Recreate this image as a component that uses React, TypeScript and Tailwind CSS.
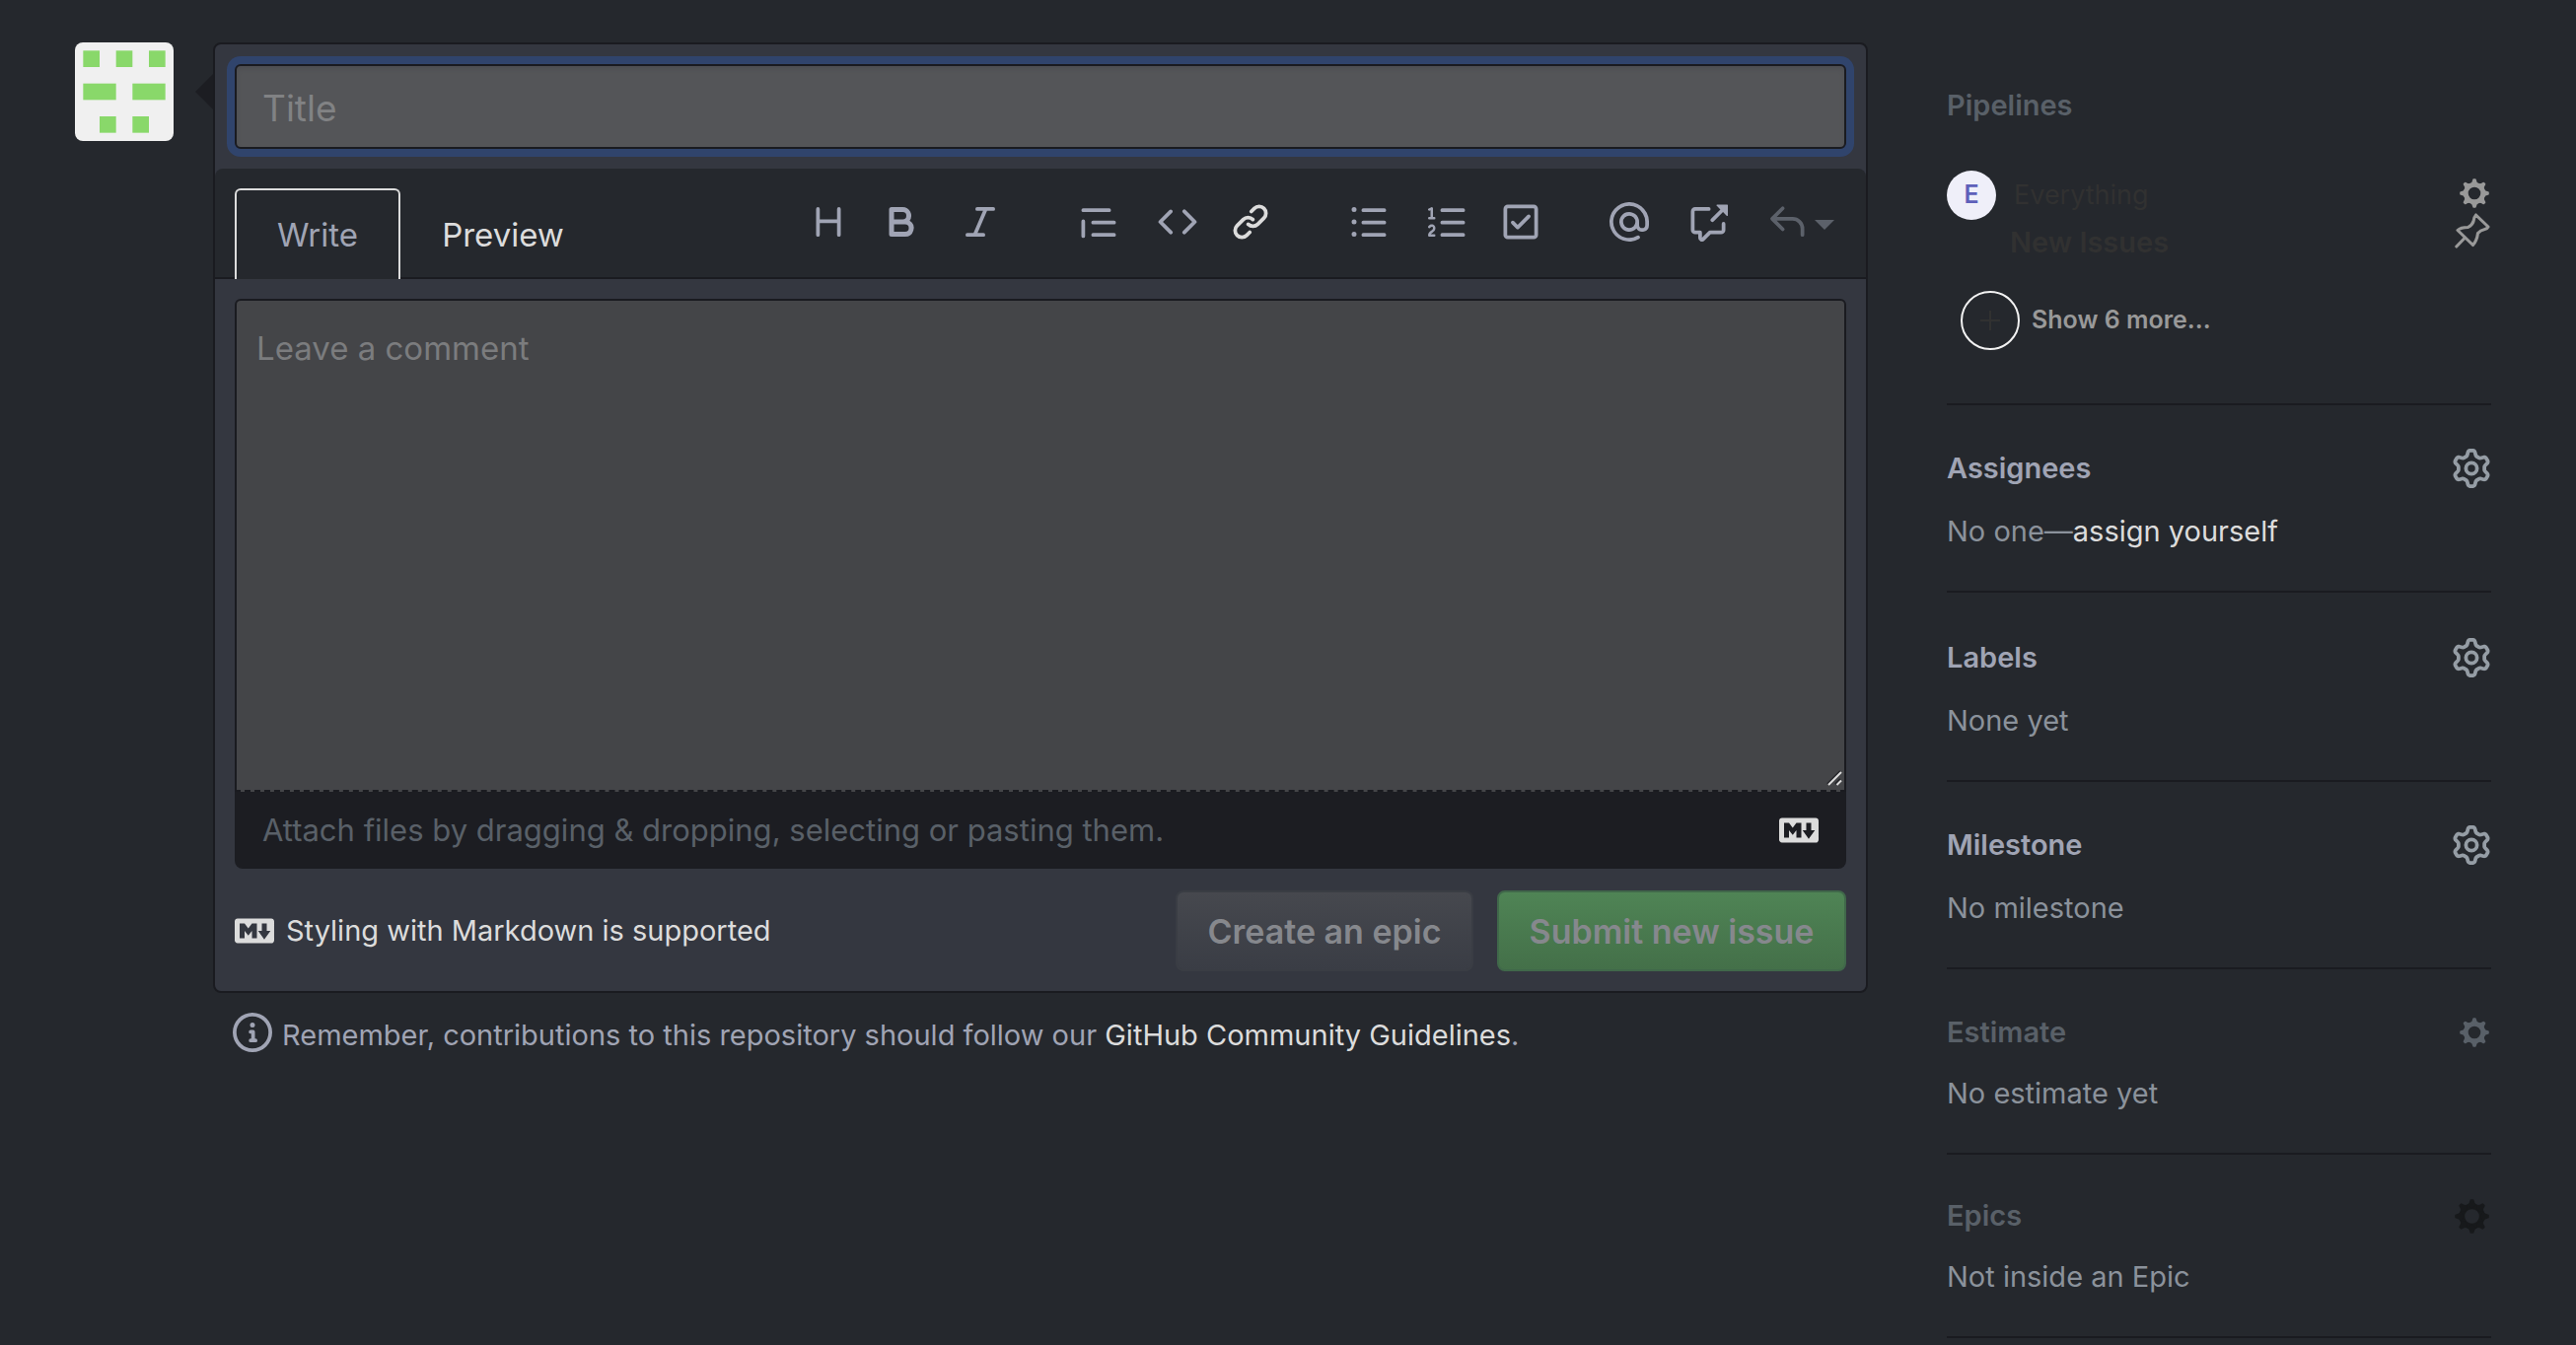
import type { ReactNode } from "react";

const PATHS = {
  heading:
    "M3.75 2a.75.75 0 01.75.75V7h7V2.75a.75.75 0 011.5 0v10.5a.75.75 0 01-1.5 0V8.5h-7v4.75a.75.75 0 01-1.5 0V2.75A.75.75 0 013.75 2z",
  bold: "M4 2a1 1 0 00-1 1v10a1 1 0 001 1h5.5a3.5 3.5 0 001.852-6.47A3.5 3.5 0 008.5 2H4zm4.5 5a1.5 1.5 0 100-3H5v3h3.5zM5 9v3h4.5a1.5 1.5 0 000-3H5z",
  italic:
    "M6 2.75A.75.75 0 016.75 2h6.5a.75.75 0 010 1.5h-2.505l-3.858 9H9.25a.75.75 0 010 1.5h-6.5a.75.75 0 010-1.5h2.505l3.858-9H6.75A.75.75 0 016 2.75z",
  quote:
    "M1.75 2.5a.75.75 0 000 1.5h10.5a.75.75 0 000-1.5H1.75zm4 5a.75.75 0 000 1.5h8.5a.75.75 0 000-1.5h-8.5zm0 5a.75.75 0 000 1.5h8.5a.75.75 0 000-1.5h-8.5zM2.5 7.75a.75.75 0 00-1.5 0v6a.75.75 0 001.5 0v-6z",
  code: "M4.72 3.22a.75.75 0 011.06 1.06L2.06 8l3.72 3.72a.75.75 0 11-1.06 1.06L.47 8.53a.75.75 0 010-1.06l4.25-4.25zm6.56 0a.75.75 0 10-1.06 1.06L13.94 8l-3.72 3.72a.75.75 0 101.06 1.06l4.25-4.25a.75.75 0 000-1.06l-4.25-4.25z",
  link: "M7.775 3.275a.75.75 0 001.06 1.06l1.25-1.25a2 2 0 112.83 2.83l-2.5 2.5a2 2 0 01-2.83 0 .75.75 0 00-1.06 1.06 3.5 3.5 0 004.95 0l2.5-2.5a3.5 3.5 0 00-4.95-4.95l-1.25 1.25zm-4.69 9.64a2 2 0 010-2.83l2.5-2.5a2 2 0 012.83 0 .75.75 0 001.06-1.06 3.5 3.5 0 00-4.95 0l-2.5 2.5a3.5 3.5 0 004.95 4.95l1.25-1.25a.75.75 0 00-1.06-1.06l-1.25 1.25a2 2 0 01-2.83 0z",
  bullets:
    "M2 4a1 1 0 100-2 1 1 0 000 2zm3.75-1.5a.75.75 0 000 1.5h8.5a.75.75 0 000-1.5h-8.5zm0 5a.75.75 0 000 1.5h8.5a.75.75 0 000-1.5h-8.5zm0 5a.75.75 0 000 1.5h8.5a.75.75 0 000-1.5h-8.5zM3 8a1 1 0 11-2 0 1 1 0 012 0zm-1 6a1 1 0 100-2 1 1 0 000 2z",
  numbers:
    "M2.003 2.5a.5.5 0 00-.723-.447l-1.003.5a.5.5 0 00.446.895l.28-.14V6H.5a.5.5 0 000 1h2.006a.5.5 0 100-1h-.503V2.5zM5 3.25a.75.75 0 01.75-.75h8.5a.75.75 0 010 1.5h-8.5A.75.75 0 015 3.25zm0 5a.75.75 0 01.75-.75h8.5a.75.75 0 010 1.5h-8.5A.75.75 0 015 8.25zm0 5a.75.75 0 01.75-.75h8.5a.75.75 0 010 1.5h-8.5a.75.75 0 01-.75-.75zM.924 10.32l.003-.004a.851.851 0 01.144-.153A.66.66 0 011.5 10c.195 0 .306.068.374.146a.57.57 0 01.128.376c0 .453-.269.682-.8 1.078l-.035.025C.692 11.98 0 12.495 0 13.5a.5.5 0 00.5.5h2.003a.5.5 0 000-1H1.146c.132-.197.351-.372.654-.597l.047-.035c.47-.35 1.156-.858 1.156-1.845 0-.365-.118-.744-.377-1.038-.268-.303-.658-.484-1.126-.484-.48 0-.84.202-1.068.392a1.858 1.858 0 00-.348.384l-.007.011-.002.004-.001.002-.001.001a.5.5 0 00.851.525z",
  tasks:
    "M2.5 2.75a.25.25 0 01.25-.25h10.5a.25.25 0 01.25.25v10.5a.25.25 0 01-.25.25H2.75a.25.25 0 01-.25-.25V2.75zM2.75 1A1.75 1.75 0 001 2.75v10.5c0 .966.784 1.75 1.75 1.75h10.5A1.75 1.75 0 0015 13.25V2.75A1.75 1.75 0 0013.25 1H2.75zm9.03 5.28a.75.75 0 00-1.06-1.06L6.75 9.19 5.28 7.72a.75.75 0 00-1.06 1.06l2 2a.75.75 0 001.06 0l4.5-4.5z",
  mention:
    "M4.75 2.37a6.5 6.5 0 006.5 11.26.75.75 0 01.75 1.298 8 8 0 113.994-7.273.754.754 0 01.006.095v1.5a2.75 2.75 0 01-5.072 1.475A4 4 0 1112 8v1.25a1.25 1.25 0 002.5 0V7.867a6.5 6.5 0 00-9.75-5.496V2.37zM10.5 8a2.5 2.5 0 10-5 0 2.5 2.5 0 005 0z",
  reference:
    "M16 1.25v4.146a.25.25 0 01-.427.177L14.03 4.03l-3.75 3.75a.75.75 0 11-1.06-1.06l3.75-3.75-1.543-1.543A.25.25 0 0111.604 1h4.146a.25.25 0 01.25.25zM2.75 3.5a.25.25 0 00-.25.25v7.5c0 .138.112.25.25.25h2a.75.75 0 01.75.75v2.19l2.72-2.72a.75.75 0 01.53-.22h4.5a.25.25 0 00.25-.25v-2.5a.75.75 0 111.5 0v2.5A1.75 1.75 0 0113.25 13H9.06l-2.573 2.573A1.457 1.457 0 014 14.543V13H2.75A1.75 1.75 0 011 11.25v-7.5C1 2.784 1.784 2 2.75 2h5.5a.75.75 0 010 1.5h-5.5z",
  reply:
    "M6.78 1.97a.75.75 0 010 1.06L3.81 6h6.44A4.75 4.75 0 0115 10.75v2.5a.75.75 0 01-1.5 0v-2.5a3.25 3.25 0 00-3.25-3.25H3.81l2.97 2.97a.75.75 0 11-1.06 1.06L1.47 7.28a.75.75 0 010-1.06l4.25-4.25a.75.75 0 011.06 0z",
  gear: "M7.429 1.525a6.593 6.593 0 011.142 0c.036.003.108.036.137.146l.289 1.105c.147.56.55.967.997 1.189.174.086.341.183.501.29.417.278.97.423 1.53.27l1.102-.303c.11-.03.175.016.195.046.219.31.41.641.573.989.014.031.022.11-.059.19l-.815.806c-.411.406-.562.957-.53 1.456a4.588 4.588 0 010 .582c-.032.499.119 1.05.53 1.456l.815.806c.08.08.073.159.059.19a6.494 6.494 0 01-.573.99c-.02.029-.086.074-.195.045l-1.103-.303c-.559-.153-1.112-.008-1.529.27-.16.107-.327.204-.5.29-.449.222-.851.628-.998 1.189l-.289 1.105c-.029.11-.101.143-.137.146a6.613 6.613 0 01-1.142 0c-.036-.003-.108-.037-.137-.146l-.289-1.105c-.147-.56-.55-.967-.997-1.189a4.502 4.502 0 01-.501-.29c-.417-.278-.97-.423-1.53-.27l-1.102.303c-.11.03-.175-.016-.195-.046a6.492 6.492 0 01-.573-.989c-.014-.031-.022-.11.059-.19l.815-.806c.411-.406.562-.957.53-1.456a4.587 4.587 0 010-.582c.032-.499-.119-1.05-.53-1.456l-.815-.806c-.08-.08-.073-.159-.059-.19a6.44 6.44 0 01.573-.99c.02-.029.086-.075.195-.045l1.103.303c.559.153 1.112.008 1.529-.27.16-.107.327-.204.5-.29.449-.222.851-.628.998-1.189l.289-1.105c.029-.11.101-.143.137-.146zM8 0c-.236 0-.47.01-.701.03-.743.065-1.29.615-1.458 1.261l-.29 1.106c-.017.066-.078.158-.211.224a5.994 5.994 0 00-.668.386c-.123.082-.233.09-.3.071L3.27 2.776c-.644-.177-1.392.02-1.82.63a7.977 7.977 0 00-.704 1.217c-.315.675-.111 1.422.363 1.891l.815.806c.05.048.098.147.088.294a6.084 6.084 0 000 .772c.01.147-.038.246-.088.294l-.815.806c-.474.469-.678 1.216-.363 1.891.2.428.436.835.704 1.218.428.609 1.176.806 1.82.63l1.103-.303c.066-.019.176-.011.299.071.213.143.436.272.668.386.133.066.194.158.212.224l.289 1.106c.169.646.715 1.196 1.458 1.26a8.094 8.094 0 001.402 0c.743-.064 1.29-.614 1.458-1.26l.29-1.106c.017-.066.078-.158.211-.224a5.98 5.98 0 00.668-.386c.123-.082.233-.09.3-.071l1.102.302c.644.177 1.392-.02 1.82-.63.268-.382.505-.789.704-1.217.315-.675.111-1.422-.364-1.891l-.814-.806c-.05-.048-.098-.147-.088-.294a6.1 6.1 0 000-.772c-.01-.147.039-.246.088-.294l.814-.806c.475-.469.679-1.216.364-1.891a7.992 7.992 0 00-.704-1.218c-.428-.609-1.176-.806-1.82-.63l-1.103.303c-.066.019-.176.011-.299-.071a5.991 5.991 0 00-.668-.386c-.133-.066-.194-.158-.212-.224L10.16 1.29C9.99.645 9.444.095 8.701.031A8.094 8.094 0 008 0zm1.5 8a1.5 1.5 0 11-3 0 1.5 1.5 0 013 0zM11 8a3 3 0 11-6 0 3 3 0 016 0z",
  info: "M8 1.5a6.5 6.5 0 100 13 6.5 6.5 0 000-13zM0 8a8 8 0 1116 0A8 8 0 010 8zm6.5-.25A.75.75 0 017.25 7h1a.75.75 0 01.75.75v2.75h.25a.75.75 0 010 1.5h-2a.75.75 0 010-1.5h.25v-2h-.25a.75.75 0 01-.75-.75zM8 6a1 1 0 100-2 1 1 0 000 2z",
  markdown:
    "M14.85 3H1.15C.52 3 0 3.52 0 4.15v7.69C0 12.48.52 13 1.15 13h13.69c.64 0 1.15-.52 1.15-1.15v-7.7C16 3.52 15.48 3 14.85 3zM9 11H7V8L5.5 9.92 4 8v3H2V5h2l1.5 2L7 5h2v6zm2.99.5L9.5 8H11V5h2v3h1.5l-2.51 3.5z",
};

type IconName = keyof typeof PATHS;

function Icon({ name, className = "size-10" }: { name: IconName; className?: string }) {
  return (
    <svg viewBox="0 0 16 16" fill="currentColor" fillRule="evenodd" aria-hidden="true" className={`block shrink-0 ${className}`}>
      <path d={PATHS[name]} />
    </svg>
  );
}

const TOOTH_ANGLES = [0, 45, 90, 135, 180, 225, 270, 315];

function Cog({ className }: { className: string }) {
  return (
    <svg viewBox="0 0 30 30" fill="currentColor" aria-hidden="true" className={`mr-0.5 block shrink-0 ${className}`}>
      <circle cx="15" cy="15" r="8.7" fill="none" stroke="currentColor" strokeWidth="4.8" />
      {TOOTH_ANGLES.map((a) => (
        <path
          key={a}
          transform={`rotate(${a} 15 15)`}
          d="M10.8 5.2Q12.9 3.9 13.2 1.2Q13.3 .2 14.2 .2H15.8Q16.7 .2 16.8 1.2Q17.100 3.9 19.2 5.2L15 8Z"
        />
      ))}
    </svg>
  );
}

function Pin() {
  return (
    <svg viewBox="0 0 36 36" fill="none" stroke="currentColor" strokeWidth="3.1" strokeLinejoin="round" strokeLinecap="round" aria-hidden="true" className="mr-px block size-9">
      <path d="M21.500 2L34 14Q33 16 30.500 16.500Q26 17.500 23.500 20.500Q22.500 28 18.500 32.500L3 17.500Q6 14.500 13.500 14.500Q18 12 19 8.500Q19.500 4 21.500 2ZM10.500 25L1.800 34" />
    </svg>
  );
}

const AVATAR_CELLS = [
  [0, 0, 1], [2, 0, 1], [4, 0, 1],
  [0, 2, 2], [3, 2, 2],
  [1, 4, 1], [3, 4, 1],
];

function Avatar() {
  return (
    <svg viewBox="0 0 12 12" role="img" aria-label="Your avatar" className="block size-[100px] shrink-0 rounded-lg bg-[#f0f0f0]">
      {AVATAR_CELLS.map(([x, y, w]) => (
        <rect key={`${x}-${y}`} x={1 + x * 2} y={1 + y * 2} width={w * 2} height="2" fill="#89d86a" />
      ))}
    </svg>
  );
}

const TOOLS: { name: IconName; label: string; space: string; color: string }[] = [
  { name: "heading", label: "Add header text", space: "", color: "text-[#a0a4b4]" },
  { name: "bold", label: "Add bold text", space: "ml-[34px]", color: "text-[#a0a4b4]" },
  { name: "italic", label: "Add italic text", space: "ml-10", color: "text-[#a0a4b4]" },
  { name: "quote", label: "Insert a quote", space: "ml-20", color: "text-[#a0a4b4]" },
  { name: "code", label: "Insert code", space: "ml-10", color: "text-[#a0a4b4]" },
  { name: "link", label: "Add a link", space: "ml-[34px]", color: "text-[#dcdcdc]" },
  { name: "bullets", label: "Add a bulleted list", space: "ml-20", color: "text-[#a0a4b4]" },
  { name: "numbers", label: "Add a numbered list", space: "ml-10", color: "text-[#a0a4b4]" },
  { name: "tasks", label: "Add a task list", space: "ml-[34px]", color: "text-[#a0a4b4]" },
  { name: "mention", label: "Mention a user or team", space: "ml-[70px]", color: "text-[#a0a4b4]" },
  { name: "reference", label: "Reference an issue or pull request", space: "ml-10", color: "text-[#a0a4b4]" },
];

function Section({
  title,
  icon,
  dim = false,
  top = "pt-11",
  gap = "mt-6",
  children,
}: {
  title: string;
  icon: ReactNode;
  dim?: boolean;
  top?: string;
  gap?: string;
  children: ReactNode;
}) {
  return (
    <section className={`border-b-2 border-[#1a1b20] pb-10 ${top}`}>
      <div className="flex h-10 items-center justify-between">
        <h2 className={`text-[29px] leading-10 font-semibold ${dim ? "text-[#596068]" : "text-[#a0a4b4]"}`}>{title}</h2>
        <button type="button" aria-label={`Edit ${title.toLowerCase()}`} className="flex w-10 justify-end text-[#959da5]">
          {icon}
        </button>
      </div>
      <p className={`text-[29px] leading-10 text-[#8b929b] ${gap}`}>{children}</p>
    </section>
  );
}

export default function App() {
  return (
    <div className="flex min-h-screen items-start overflow-hidden bg-[#25282d] pt-[43px] pr-[86px] pl-[76px] font-['Inter','Liberation_Sans',sans-serif]">
      <Avatar />
      <main className="ml-10 min-w-0 flex-1">
        <form className="relative rounded-lg border-2 border-[#1a1b20] bg-[#343740]" onSubmit={(e) => e.preventDefault()}>
          <svg viewBox="0 0 18 36" aria-hidden="true" className="absolute top-[30px] -left-5 h-9 w-[18px]">
            <path d="M18 0L0 18L18 36Z" fill="#1c1d22" />
          </svg>
          <div className="p-5">
            <input
              type="text"
              aria-label="Title"
              placeholder="Title"
              className="block h-[86px] w-full rounded-md border-2 border-[#1a1b20] bg-[#545558] px-[26px] pt-0.5 text-[37px] text-[#dcdcdc] shadow-[0_0_0_8px_#30446c,inset_0_3px_4px_#4d4e52] outline-none placeholder:text-[#818284]"
            />
          </div>
          <div className="flex h-28 items-end justify-between rounded-t-lg border-b-2 border-[#1a1b20] bg-[#25282d] px-5">
            <div role="tablist" className="-mb-0.5 flex">
              <button type="button" role="tab" aria-selected="true" className="h-[92px] w-[168px] rounded-t-md border-2 border-b-0 border-[#dcdcdc] bg-[#25282d] pt-0.5 text-[33px] text-[#a0a4b4]">
                Write
              </button>
              <button type="button" role="tab" aria-selected="false" className="h-[92px] w-[208px] border-2 border-b-0 border-transparent pt-0.5 text-[33px] text-[#dcdcdc]">
                Preview
              </button>
            </div>
            <div className="flex items-center pb-9">
              {TOOLS.map((t) => (
                <button key={t.name} type="button" aria-label={t.label} className={`${t.space} ${t.color}`}>
                  <Icon name={t.name} />
                </button>
              ))}
              <button type="button" aria-label="Add saved reply" className="ml-10 flex items-center gap-2 pr-3 text-[#5c616a]">
                <Icon name="reply" />
                <svg viewBox="0 0 20 10" aria-hidden="true" className="mt-1.5 h-2.5 w-5">
                  <path d="M0 0h20L10 10z" fill="currentColor" />
                </svg>
              </button>
            </div>
          </div>
          <div className="p-5">
            <div className="relative">
              <textarea
                aria-label="Comment body"
                placeholder="Leave a comment"
                className="block h-[500px] w-full resize-none rounded-t-md border-2 border-[#1a1b20] [border-bottom-style:dashed] bg-[#444548] px-5 py-[22px] text-[33px] leading-[52px] text-[#dcdcdc] outline-none placeholder:text-[#7b7c7e]"
              />
              <svg viewBox="0 0 16 16" aria-hidden="true" className="absolute right-1 bottom-1.5 size-4">
                <path d="M1 14L14 1M9 14L14 9" stroke="#25262a" strokeWidth="2" />
                <path d="M2 15L15 2M10.500 15L15 10.500" stroke="#dcdcdc" strokeWidth="2" />
              </svg>
            </div>
            <div className="flex h-[78px] items-center justify-between rounded-b-lg bg-[#1c1d22] px-7">
              <span className="text-[31px] text-[#596068]">Attach files by dragging &amp; dropping, selecting or pasting them.</span>
              <a href="#markdown" aria-label="Markdown guide" className="text-[#dcdcdc]">
                <Icon name="markdown" />
              </a>
            </div>
            <div className="mt-[22px] flex h-[82px] items-center">
              <a href="#styling" className="mr-auto flex items-center gap-3 text-[29px] text-[#dcdcdc]">
                <Icon name="markdown" />
                Styling with Markdown is supported
              </a>
              <button type="button" disabled className="h-full w-[302px] rounded-lg border-2 border-[#3a3d44] bg-linear-to-b from-[#46484e] to-[#3a3d45] text-[34px] font-semibold text-[#86888d]">
                Create an epic
              </button>
              <button type="submit" disabled className="ml-6 h-full w-[354px] rounded-lg border-2 border-[#40684a] bg-linear-to-b from-[#4f8455] to-[#447049] text-[34px] font-semibold text-[#86888d]">
                Submit new issue
              </button>
            </div>
          </div>
        </form>
        <div className="mt-5 flex items-start gap-2.5 pl-5 text-[29px] leading-10 text-[#a0a4b4]">
          <Icon name="info" />
          <p className="pt-[3px]">
            Remember, contributions to this repository should follow our{" "}
            <a href="#guidelines" className="text-[#dcdcdc]">
              GitHub Community Guidelines
            </a>
            .
          </p>
        </div>
      </main>
      <aside className="ml-20 w-[552px] shrink-0">
        <section className="border-b-2 border-[#1a1b20] pt-11 pb-[54px]">
          <h2 className="text-[29px] leading-10 font-semibold text-[#596068]">Pipelines</h2>
          <div className="mt-[46px] flex items-start">
            <span className="flex size-[50px] items-center justify-center rounded-full bg-[#efeff9] text-[25px] font-semibold text-[#5e60ba]">E</span>
            <div className="ml-3.5 flex flex-col pb-1">
              <span className="pl-1 text-[27px] leading-[50px] text-[#313131]">Everything</span>
              <span className="text-[29px] leading-[46px] font-semibold text-[#313131]">New Issues</span>
            </div>
            <div className="ml-auto flex flex-col items-end gap-[5px] pt-2 text-[#999999]">
              <button type="button" aria-label="Pipeline settings">
                <Cog className="size-[30px]" />
              </button>
              <button type="button" aria-label="Pin workspace">
                <Pin />
              </button>
            </div>
          </div>
          <button type="button" className="mt-[22px] ml-3.5 flex items-center gap-3 text-[25px] font-semibold text-[#999999]">
            <span className="flex size-[60px] items-center justify-center rounded-full border-2 border-[#f2f2f2]">
              <svg viewBox="0 0 20 20" aria-hidden="true" className="size-5">
                <path d="M10 0V20M0 10H20" stroke="#313131" strokeWidth="2" />
              </svg>
            </span>
            Show 6 more...
          </button>
        </section>
        <Section title="Assignees" icon={<Icon name="gear" />}>
          No one—
          <a href="#assign" className="text-[#dcdcdc]">
            assign yourself
          </a>
        </Section>
        <Section title="Labels" icon={<Icon name="gear" />} top="pt-[46px]">
          None yet
        </Section>
        <Section title="Milestone" icon={<Icon name="gear" />}>
          No milestone
        </Section>
        <Section title="Estimate" dim icon={<Cog className="size-[30px] text-[#596068]" />} gap="mt-[22px]">
          No estimate yet
        </Section>
        <Section title="Epics" dim icon={<Cog className="size-[35px] text-[#17191b]" />} top="pt-[42px]" gap="mt-[22px]">
          Not inside an Epic
        </Section>
      </aside>
    </div>
  );
}
